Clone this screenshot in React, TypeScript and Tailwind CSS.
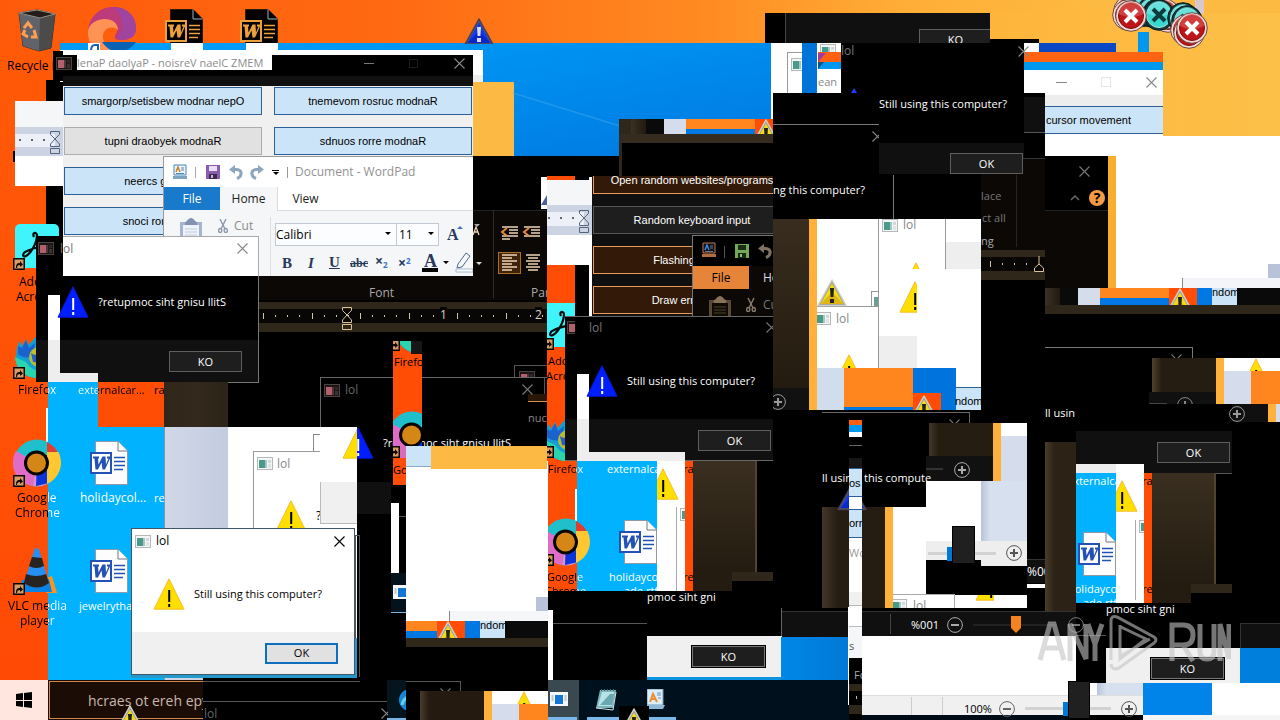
import React from "react";

type Box = { c: string; children?: React.ReactNode };

const Clip = ({ c, children }: Box) => <div className={"absolute overflow-hidden " + c}>{children}</div>;

const Blocks = ({ items }: { items: string[] }) => (
  <>
    {items.map((c, i) => (
      <div key={i} className={"absolute " + c} />
    ))}
  </>
);

const T = ({ c, children }: Box) => <span className={"absolute whitespace-nowrap leading-4 " + c}>{children}</span>;

const Btn = ({ c, children }: Box) => (
  <button type="button" className={"absolute flex items-center justify-center overflow-hidden whitespace-nowrap border leading-4 " + c}>
    {children}
  </button>
);

const Tri = ({ c, fill = "#ffdf00", edge = "#f5bd2b", mark = "#000" }: { c: string; fill?: string; edge?: string; mark?: string }) => (
  <svg viewBox="0 0 32 32" className={"absolute size-8 " + c}>
    <path d="M16 .8 31 31.2H1Z" fill={fill} stroke={edge} strokeWidth="1" strokeLinejoin="round" />
    <path d="M15.2 12h2v12h-2zM15.2 26h2v3h-2z" fill={mark} />
  </svg>
);

const GlossTri = ({ c, blue = false }: { c: string; blue?: boolean }) => (
  <svg viewBox="0 0 30 28" className={"absolute h-7 w-[30px] " + c}>
    <path d="M15 1 29 26.5H1Z" fill={blue ? "#4d5578" : "#9b9b9b"} stroke={blue ? "#4a4050" : "#d0d0c8"} strokeWidth="1.5" strokeLinejoin="round" />
    <path d="M15 4.5 26.5 25h-23Z" fill={blue ? "#1238f0" : "#f2dc12"} />
    <path d="M15 13 26.5 25h-23Z" fill={blue ? "#0a28c8" : "#dfb514"} />
    <path d="M13 9h4l-.6 9h-2.8zM13 20h4v4h-4z" fill={blue ? "#dcdcf0" : "#222"} />
  </svg>
);

const AppIcon = ({ c, dark = false }: { c: string; dark?: boolean }) => (
  <svg viewBox="0 0 16 13" className={"absolute h-[13px] w-4 " + c}>
    <rect x=".5" y=".5" width="15" height="12" fill={dark ? "#1d1518" : "#f4f6f6"} stroke={dark ? "#4a4340" : "#b4b8b8"} />
    <rect x="2" y="3" width="6" height="8" fill={dark ? "#b4606c" : "#4a9a8c"} />
    <rect x="8" y="3" width="2" height="8" fill={dark ? "#4c3636" : "#a6c6c2"} />
    <rect x="11" y="3" width="3" height="3" fill={dark ? "#2c2826" : "#cfd7d9"} />
    <rect x="11" y="7" width="3" height="4" fill={dark ? "#383331" : "#dfe3e4"} />
  </svg>
);

const Cross = ({ c }: { c: string }) => (
  <svg viewBox="0 0 11 11" className={"absolute size-[11px] " + c}>
    <path d="m.5.5 10 10m0-10-10 10" stroke="currentColor" strokeWidth="1.1" />
  </svg>
);

const WordDoc = ({ c, dark = false }: { c: string; dark?: boolean }) => {
  const ink = dark ? "#eaa03c" : "#2451b5";
  const paper = dark ? "#050301" : "#fdfdfd";
  return (
    <svg viewBox="0 0 38 44" className={"absolute h-11 w-[38px] " + c}>
      <path d="M5.500 .5H28L37.500 10V43.500H5.500Z" fill={paper} stroke={dark ? "#2a1c10" : "#909aa6"} />
      <path d="M28 .5V10h9.500" fill={paper} stroke={dark ? "#9ab4c4" : "#707880"} />
      <path d="M24 16.500h11M24 20.500h11M24 24.500h11M24 28.500h9" stroke={ink} strokeWidth="1.300" />
      <rect x="1" y="12" width="20" height="20" fill={paper} stroke={ink} strokeWidth="2" />
      <path d="M3 15.500h6v2H8l.5 6 4-8h3l.5 8 2.500-6h-1.500v-2H20v2l-5 11h-2.500l-1-7-3.500 7H5.500L4.500 17.500H3Z" fill={ink} />
    </svg>
  );
};

const Shortcut = ({ c }: { c: string }) => (
  <svg viewBox="0 0 12 12" className={"absolute size-3 " + c}>
    <path d="M0 0h12v12H0z" fill="#0a0500" />
    <path d="M1.500 1.500h9v9h-9z" fill="#d79c66" />
    <path d="M3 10c0-4 1-5 4-5V3l3 3.500L7 9V7c-2 0-3 1-3 3Z" fill="#120800" />
  </svg>
);

const Hourglass = ({ c }: { c: string }) => (
  <svg viewBox="0 0 10 23" className={"absolute h-[23px] w-2.5 " + c} fill="none" stroke="currentColor">
    <path d="M.5.500h9v3L5 8 .5 3.500zM5 8l4.500 5v2.500H.5V13zM.5 17.500h9v5h-9z" />
  </svg>
);

const Chrome = ({ c, plain = false }: { c: string; plain?: boolean }) => (
  <svg viewBox="0 0 48 48" className={"absolute size-12 " + c}>
    <circle cx="24" cy="24" r="23.500" fill="#1fc0cb" />
    <path d="M24 24 3 12A23.500 23.500 0 0 0 20 47Z" fill="#df6cc6" />
    <path d="M24 24 20 47A23.500 23.500 0 0 0 36 44Z" fill="#e78acb" />
    <path d="M24 24 23 47 36 44V16H24Z" fill="#0b35dc" />
    {!plain && <path d="M34 3a23.500 23.500 0 0 1 11 11H34Z" fill="#e33b2e" />}
    {!plain && <path d="M34 13h11.500A23.500 23.500 0 0 1 34 45Z" fill="#ffc832" />}
    <circle cx="23.500" cy="24" r="11" fill="#d48716" stroke="#080500" strokeWidth="3" />
  </svg>
);

const Firefox = ({ c }: { c: string }) => (
  <svg viewBox="0 0 44 44" className={"absolute size-11 " + c}>
    <path d="M2 20C2 14 4 9 6 6l2 5 4-7 2 6 8-8 2 7c12 1 20 10 18 22-2 8-9 12-18 12C10 43 0 34 2 20Z" fill="#139ed5" />
    <path d="M1 22c1 12 10 21 23 21 9 0 16-5 18-12-9 8-22 8-30-4Z" fill="#29d5ad" />
    <path d="M4 11l4 2 4-8 3 8 6-5-1 7 7 2-8 5c-8 1-12 0-15-3Z" fill="#1a62cd" />
    <circle cx="25" cy="22" r="10" fill="#b8bd38" />
    <path d="M17 18c6 5 12-2 17 3-7 0-8 8-15 6Z" fill="#285ec4" />
  </svg>
);

const Acro = ({ c }: { c: string }) => (
  <svg viewBox="0 0 44 44" className={"absolute size-11 " + c}>
    <rect width="44" height="44" rx="5" fill="#40f4fb" />
    <path d="M19 13c-2-4 2-6 3-2 0 9-7 19-11 21-4 2-4-3 1-5 6-3 14-5 25-5" fill="none" stroke="#050b0d" strokeWidth="2.200" />
  </svg>
);

const Zoomer = ({ c, plus = false }: { c: string; plus?: boolean }) => (
  <svg viewBox="0 0 16 16" className={"absolute size-4 " + c} fill="none" stroke="currentColor">
    <circle cx="8" cy="8" r="7.400" />
    <path d={plus ? "M4 8h8M8 4v8" : "M4 8h8"} strokeWidth="2" />
  </svg>
);

const ErrorBall = ({ c, teal = false }: { c: string; teal?: boolean }) => (
  <svg viewBox="0 0 32 32" className={"absolute size-8 " + c}>
    <circle cx="16" cy="16" r="15.300" fill={teal ? "#123b3b" : "#f2d9d4"} stroke={teal ? "#0a1c1c" : "#6b4744"} />
    <circle cx="16" cy="16" r="12.500" fill={teal ? "#38d7d0" : "#be1419"} stroke={teal ? "#b5e5e2" : "#7c0d10"} />
    <path d="M4 14a12 12 0 0 1 24 0c-7 4-17 4-24 0Z" fill={teal ? "#7be7e2" : "#d9534f"} opacity=".7" />
    <path d="m10 10 12 12m0-12L10 22" stroke={teal ? "#0c3d3d" : "#fff"} strokeWidth="4" />
  </svg>
);

const Scissors = ({ c }: { c: string }) => (
  <svg viewBox="0 0 10 14" className={"absolute h-3.5 w-2.5 " + c} fill="none" stroke="currentColor" strokeWidth="1.400">
    <path d="m2 0 5 10M8 0 3 10" />
    <ellipse cx="2.200" cy="11.500" rx="1.600" ry="2" />
    <ellipse cx="7.800" cy="11.500" rx="1.600" ry="2" />
  </svg>
);

const Clipboard = ({ c, dark = false }: { c: string; dark?: boolean }) => (
  <svg viewBox="0 0 24 28" className={"absolute h-7 w-6 " + c}>
    <path d="M1 4h22v24H1z" fill={dark ? "#5b4937" : "#a6b5cd"} />
    <path d="M4 7h16v21H4z" fill={dark ? "#100c05" : "#eef2fa"} />
    <path d="M6 4c2 0 3-4 6-4s4 4 6 4v3H6Z" fill={dark ? "#8a7257" : "#8192b3"} />
    <path d="M6 11h12M6 14h12M6 17h12" stroke={dark ? "#494027" : "#c3cede"} />
  </svg>
);

const PadIcon = ({ c, dark = false }: { c: string; dark?: boolean }) => (
  <svg viewBox="0 0 14 16" className={"absolute h-4 w-3.5 " + c}>
    <path d="M1 1h12v10H1z" fill={dark ? "#10131c" : "#eef6fd"} stroke={dark ? "#c1774a" : "#3c87bd"} />
    <path d="M3 8 5 3l2 5" fill="none" stroke={dark ? "#3b86e2" : "#ce7a20"} strokeWidth="1.500" />
    <path d="M8 4h3M8 6h3M3 9.500h8" stroke={dark ? "#64789c" : "#4b86b8"} />
    <path d="M0 12h14v3H0z" fill={dark ? "#b06d3e" : "#7ea4c4"} />
  </svg>
);

const Save = ({ c, dark = false }: { c: string; dark?: boolean }) => (
  <svg viewBox="0 0 14 14" className={"absolute size-3.5 " + c}>
    <path d="M0 0h14v14H0z" fill={dark ? "#73a85a" : "#8a5cac"} />
    <path d="M3 1h8v5H3z" fill={dark ? "#1c2d15" : "#e9dff2"} />
    <path d="M3 9h8v5H3z" fill={dark ? "#182811" : "#3c2a50"} />
    <path d="M5 10h2v3H5z" fill={dark ? "#8cbd73" : "#c8b5d8"} />
  </svg>
);

const Undo = ({ c }: { c: string }) => (
  <svg viewBox="0 0 14 15" className={"absolute h-[15px] w-3.5 " + c} fill="none" stroke="currentColor">
    <path d="M2 4.500h6c6 1 5 7 0 9" strokeWidth="3" />
    <path d="m6 0-6 4.500L6 9Z" fill="currentColor" stroke="none" />
  </svg>
);

const ScreenIcon = ({ c }: { c: string }) => (
  <svg viewBox="0 0 18 14" className={"absolute h-3.5 w-[18px] " + c}>
    <path d="M0 0h18v14H0z" fill="#f4f8fb" />
    <path d="M5 3h8v9H5z" fill="#1477d3" />
    <path d="M1.500 4h2M1.500 6h2M1.500 8h2M14.500 4h2M14.500 6h2M14.500 8h2" stroke="#7d97ad" />
  </svg>
);

const Ticks = ({ c }: { c: string }) => (
  <div className={"absolute flex w-[280px] justify-between " + c}>
    {Array.from({ length: 24 }, (_, i) => (
      <i key={i} className={i % 4 === 0 ? "h-1.5 w-px shrink-0 bg-current" : "mt-0.5 h-0.5 w-px shrink-0 bg-current"} />
    ))}
  </div>
);

const Slider = ({ c, label, value }: { c: string; label: string; value: number }) => (
  <input type="range" aria-label={label} defaultValue={value} className={"absolute h-[3px] appearance-none bg-[#d2d2d2] [&::-webkit-slider-thumb]:appearance-none [&::-webkit-slider-thumb]:h-3.5 [&::-webkit-slider-thumb]:w-2.5 [&::-webkit-slider-thumb]:bg-[#0078d7] " + c} />
);

const WarnStrip = ({ c }: { c: string }) => (
  <Clip c={"h-[17px] w-[235px] bg-[#0a0a0a] " + c}>
    <Blocks
      items={[
        "left-0 top-0 w-[15px] h-[17px] bg-linear-to-r from-[#3c3124] to-[#211a10]",
        "left-[33px] top-0 w-[22px] h-[17px] bg-[#d5dded]",
        "left-[55px] top-0 w-[69px] h-[10px] bg-[#ff861f]",
        "left-[55px] top-[10px] w-[97px] h-[7px] bg-[#0078e4]",
        "left-[124px] top-0 w-[28px] h-[17px] bg-[#ff4d08]",
        "left-[152px] top-0 w-[15px] h-[17px] bg-[#0078e4]",
        "left-[167px] top-0 w-[25px] h-[17px] bg-[#cce4f7]",
      ]}
    />
    <GlossTri c="left-[120px] top-0" />
    <T c="left-[167px] -top-1 font-['Liberation_Sans',sans-serif] text-[11px] text-black">ndom</T>
  </Clip>
);

const DesktopBase = () => (
  <>
    <Blocks
      items={[
        "inset-x-0 top-0 h-[43px] bg-[linear-gradient(to_right,#ff5a0a,#ff6a12_400px,#ff8a22_700px,#ffad36_900px,#fdba42_1100px)]",
        "left-0 top-[43px] w-[60px] h-[637px] bg-linear-to-b from-[#ff5a08] to-[#ff4a05]",
        "left-[134px] top-[43px] w-[639px] h-[113px] bg-linear-to-br from-[#00a0fa] to-[#0078e0]",
        "left-[60px] top-[43px] w-[100px] h-[7px] bg-[#009cf3]",
        "left-[990px] top-[13px] right-0 h-[123px] bg-linear-to-r from-[#ffb53c] to-[#fcc048]",
        "left-[473px] top-[82px] w-[41px] h-[74px] bg-[#fcba44]",
        "left-[1138px] top-[32px] w-[11px] h-[20px] bg-[#0098ee]",
        "left-[13px] top-[151px] w-[4px] h-[11px] bg-black",
        "left-[53px] top-[51px] w-[10px] h-[30px] bg-black",
        "left-[46px] top-[80px] w-[17px] h-[157px] bg-black",
        "left-[1195px] top-0 w-[9px] h-[14px] bg-[#d6c8cc]",
      ]}
    />
    <svg viewBox="0 0 300 113" className="absolute left-[473px] top-[43px] h-[113px] w-[300px]">
      <path d="m40 50 107 33" stroke="#3ba7ee" strokeWidth="1.500" opacity=".5" />
    </svg>
    <svg viewBox="0 0 38 44" className="absolute left-[18px] top-[9px] h-11 w-[38px]">
      <path d="M1 4 19 1l18 4-4 34-12 3L5 37Z" fill="#5a5a58" stroke="#37302a" />
      <path d="M1 4 22 9 21 42 5 37Z" fill="#61636a" />
      <path d="M22 9 37 5 33 39 21 42Z" fill="#4b4b4b" />
      <path d="M1 4 19 1l18 4-15 4Z" fill="#241c18" stroke="#8e8e8a" />
      <path d="m6 19 4-5 4 5m2 2 2 7h-5m-3 0-5-3 2-4" fill="none" stroke="#ff9e50" strokeWidth="3" />
    </svg>
    <Clip c="left-[86px] top-[6px] w-[52px] h-[44px]">
      <svg viewBox="0 0 52 48" className="h-12 w-[52px]">
        <path d="M2 24C4 9 15 1 27 1c14 0 23 9 23 21 0 9-6 12-16 12-8 0-5-5-3-8 2-8-12-13-22-5-5 4-7 7-7 3Z" fill="#bd3a7b" />
        <path d="M27 1c14 0 23 9 23 21 0 9-6 12-16 12l-4-3c8-5 9-20-3-30Z" fill="#a0449f" />
        <path d="M2 24c5-15 30-14 30 0-8-6-16 0-15 8 1 9 8 15 18 15C14 50 1 42 2 24Z" fill="#ff9255" />
        <path d="M16 36h34c-8 12-25 13-34 0Z" fill="#0c62b2" />
      </svg>
    </Clip>
    <Clip c="left-[88px] top-[43px] w-[12px] h-[8px] bg-white">
      <svg viewBox="0 0 12 8" className="h-2 w-3"><path d="M3 8c0-4 1-6 4-6h3v5" fill="none" stroke="#1662b0" strokeWidth="2" /></svg>
    </Clip>
    <Clip c="left-[165px] top-[9px] w-[39px] h-[34px]"><WordDoc dark c="left-0 top-0" /></Clip>
    <Clip c="left-[240px] top-[9px] w-[39px] h-[34px]"><WordDoc dark c="left-0 top-0" /></Clip>
    <Blocks items={["left-[171px] top-[43px] w-[32px] h-[7px] bg-white", "left-[246px] top-[43px] w-[32px] h-[7px] bg-white"]} />
    <Clip c="left-[464px] top-[18px] w-[30px] h-[26px]"><GlossTri blue c="left-0 top-0" /></Clip>
    <T c="left-[7px] top-[58px] text-xs text-black">Recycle I</T>
    <Acro c="left-[15px] top-[224px]" />
    <Shortcut c="left-[13px] top-[258px]" />
    <T c="left-[19px] top-[274px] text-xs text-black">Ado</T>
    <T c="left-[16px] top-[289px] text-xs text-black">Acro</T>
    <Firefox c="left-[14px] top-[335px]" />
    <Shortcut c="left-[13px] top-[367px]" />
    <ErrorBall c="left-[1113px] -top-[5px]" />
    <ErrorBall c="left-[1118px] -top-[3px]" />
    <ErrorBall c="left-[1123px] -top-[4px]" />
    <ErrorBall teal c="left-[1128px] -top-[5px]" />
    <ErrorBall teal c="left-[1136px] -top-[4px]" />
    <ErrorBall teal c="left-[1142px] -top-[2px]" />
    <ErrorBall c="left-[1152px] top-px" />
    <ErrorBall c="left-[1148px] -top-[2px]" />
    <ErrorBall teal c="left-[1143px] -top-px" />
    <ErrorBall teal c="left-[1167px] top-[2px]" />
    <ErrorBall teal c="left-[1171px] top-[5px]" />
    <ErrorBall c="left-[1170px] top-[14px]" />
    <ErrorBall c="left-[1173px] top-[17px]" />
    <ErrorBall c="left-[1112px] -top-px" />
    <ErrorBall c="left-[1115px] top-0" />
    <ErrorBall c="left-[1176px] top-[12px]" />
  </>
);

const PayloadPanel = () => {
  const b = "font-['Liberation_Sans',sans-serif] text-[11px] text-black border-[#2c5f97] bg-[#cce4f7] h-7 w-[198px]";
  return (
    <>
      <Blocks
        items={[
          "left-[60px] top-[50px] w-[423px] h-[32px] bg-white",
          "left-[473px] top-[75px] w-[10px] h-[7px] bg-[#eeeeee]",
          "left-[53px] top-[51px] w-[10px] h-[30px] bg-black",
          "left-[63px] top-[55px] w-[410px] h-[21px] bg-black",
          "left-[77px] top-[51px] w-[195px] h-[19px] bg-white",
          "left-[63px] top-[76px] w-[410px] h-[10px] bg-[#101010]",
          "left-[63px] top-[86px] w-[410px] h-[151px] bg-[#f0f0f0]",
          "left-[364px] top-[63px] w-[10px] h-px bg-[#777]",
          "left-[409px] top-[59px] w-[9px] h-[9px] border border-[#1c1c1c]",
        ]}
      />
      <AppIcon dark c="left-[56px] top-[57px]" />
      <T c="left-[77px] top-[55px] text-[11px] text-[#8c8c8c]">lenaP daolyaP - noisreV naelC ZMEM</T>
      <Cross c="left-[454px] top-[58px] text-[#8a8a8a]" />
      <Btn c={"left-[64px] top-[87px] " + b}>smargorp/setisbew modnar nepO</Btn>
      <Btn c={"left-[274px] top-[87px] " + b}>tnemevom rosruc modnaR</Btn>
      <Btn c="left-[64px] top-[127px] h-7 w-[198px] border-[#adadad] bg-[#e1e1e1] font-['Liberation_Sans',sans-serif] text-[11px] text-black">tupni draobyek modnaR</Btn>
      <Btn c={"left-[274px] top-[127px] " + b}>sdnuos rorre modnaR</Btn>
      <Btn c={"left-[64px] top-[167px] " + b}>neercs gnihsalF</Btn>
      <Btn c={"left-[64px] top-[207px] " + b}>snoci rorre warD</Btn>
      <Clip c="left-[15px] top-[101px] w-[48px] h-[85px] bg-white">
        <Blocks items={["inset-x-0 top-0 h-[26px] bg-[#f5f6f7]", "inset-x-0 top-[26px] h-[29px] bg-[#ccd3e2]", "left-0 right-2 top-[33px] h-[13px] bg-[#edf0f8]", "left-[4px] top-[38px] size-0.5 bg-[#666]", "left-[16px] top-[38px] size-0.5 bg-[#666]", "left-[28px] top-[38px] size-0.5 bg-[#666]"]} />
        <Hourglass c="left-[35px] top-[30px] text-[#53657c]" />
      </Clip>
    </>
  );
};

const WordPadDark = () => (
  <>
    <Clip c="left-[259px] top-[156px] w-[288px] h-[292px] bg-black">
      <Blocks
        items={[
          "inset-x-0 top-[54px] h-[90px] border-t border-[#222] bg-[#0b0806]",
          "left-[234px] top-[54px] w-px h-[88px] bg-[#302b28]",
          "inset-x-0 top-[146px] h-[30px] bg-[#30271b]",
          "inset-x-0 top-[153px] h-[14px] bg-[#080706]",
          "left-[239px] top-[96px] w-[23px] h-[22px] border border-[#aa6e28] bg-[#402408]",
        ]}
      />
      <svg viewBox="0 0 76 60" className="absolute left-[212px] top-[66px] h-[60px] w-[76px]" fill="none" stroke="#efd5b8" strokeWidth="1.300">
        <path d="M2 13 5 5l3 8M3 10h4M31 5h16M38 8h9M38 11h9M31 14h16M31 17h8M53 5h16M60 8h9M60 11h9M53 14h16" />
        <path d="M3 2h6L6 5z" fill="#aaa" stroke="none" />
        <path d="m36 6-5 4 5 4m22-8-5 4 5 4" stroke="#e58a38" strokeWidth="2" />
        <path d="M31 33h15M31 36h10M31 39h15M31 42h10M31 45h15M31 48h10M55 33h14M57 36h10M55 39h14M57 42h10M55 45h14M57 48h10" />
      </svg>
      <T c="left-[110px] top-[129px] text-xs text-[#aaa]">Font</T>
      <T c="left-[272px] top-[129px] text-xs text-[#aaa]">Par</T>
      <Ticks c="left-[4px] top-[157px] text-[#cfc4ae]" />
      <T c="left-[181px] top-[151px] bg-[#080706] text-xs text-[#d8d0c2]">1</T>
      <T c="left-[276px] top-[151px] bg-[#080706] text-xs text-[#d8d0c2]">2</T>
      <Hourglass c="left-[83px] top-[151px] text-[#dcc49a]" />
      <svg viewBox="0 0 6 3" className="absolute left-[217px] top-[106px] h-[3px] w-1.5"><path d="M0 0h6L3 3z" fill="#ddd" /></svg>
    </Clip>
    <Blocks items={["left-[541px] top-[177px] w-[6px] h-[32px] bg-white"]} />
    <svg viewBox="0 0 6 10" className="absolute left-[541px] top-[195px] h-2.5 w-1.5"><path d="m6 0v10H0Z" fill="#4d5f9a" /></svg>
  </>
);

const WordPadLight = () => (
  <Clip c="left-[163px] top-[156px] w-[310px] h-[120px] border-l border-t border-[#9a9a9a] bg-[#f5f6f7]">
    <div className="absolute inset-x-0 top-0 h-[30px] bg-white" />
    <PadIcon c="left-[9px] top-[7px]" />
    <Save c="left-[42px] top-[8px]" />
    <Undo c="left-[65px] top-[8px] text-[#8da6bd]" />
    <Undo c="left-[86px] top-[8px] -scale-x-100 text-[#8da6bd]" />
    <Blocks items={["left-[31px] top-[10px] w-px h-[11px] bg-[#aaa]", "left-[123px] top-[10px] w-px h-[11px] bg-[#999]", "left-[108px] top-[13px] w-[7px] h-px bg-black", "left-[113px] top-[30px] right-0 h-[24px] border-b border-l border-[#dadbdc] bg-white", "left-[106px] top-[60px] w-px h-[60px] bg-[#dedfe1]"]} />
    <svg viewBox="0 0 6 3" className="absolute left-[109px] top-[15px] h-[3px] w-1.5"><path d="M0 0h6L3 3z" /></svg>
    <T c="left-[131px] top-[7px] text-xs text-[#929292]">Document - WordPad</T>
    <Btn c="left-0 top-[30px] h-[23px] w-[56px] border-[#1979ca] bg-[#1979ca] text-xs text-white">File</Btn>
    <Btn c="left-[56px] top-[30px] h-[23px] w-[57px] border-transparent text-xs text-[#222]">Home</Btn>
    <Btn c="left-[114px] top-[30px] h-[23px] w-[55px] border-transparent text-xs text-[#222]">View</Btn>
    <Clipboard c="left-[15px] top-[61px]" />
    <Scissors c="left-[54px] top-[62px] text-[#8c98ac]" />
    <T c="left-[70px] top-[61px] text-xs text-[#8b8b8b]">Cut</T>
    <select aria-label="Font family" className="absolute left-[111px] top-[66px] h-[23px] w-[122px] appearance-none border border-[#c3c9d2] bg-[#fcfdfe] text-xs leading-4 text-black"><option>Calibri</option></select>
    <select aria-label="Font size" className="absolute left-[232px] top-[66px] h-[23px] w-[43px] appearance-none border border-[#c3c9d2] bg-[#fcfdfe] px-0.5 text-xs leading-4 text-black"><option>11</option></select>
    <svg viewBox="0 0 200 60" className="absolute left-[110px] top-[62px] h-[60px] w-[200px]">
      <path d="M111 13h6l-3 3zM154 13h6l-3 3zM169 42h6l-3 3z" />
      <path d="m183 10 3-3 3 3z" fill="#4272b5" />
      <path d="M148 49h16v4h-16z" />
      <path d="m184 45 8-11 4 3-8 11-5 1z" fill="#f4f6f8" stroke="#52688b" />
      <path d="M182 50h17v3h-17z" fill="#fff" stroke="#a3bad1" />
    </svg>
    <div className="font-['Liberation_Serif',serif] font-bold text-[#27395b]">
      <T c="left-[283px] top-[70px] text-base">A</T>
      <T c="left-[118px] top-[98px] text-[15px]">B</T>
      <T c="left-[144px] top-[98px] text-[15px] italic">I</T>
      <T c="left-[165px] top-[97px] text-[15px] underline">U</T>
      <T c="left-[186px] top-[98px] text-xs line-through">abc</T>
      <T c="left-[260px] top-[96px] text-lg">A</T>
    </div>
    <T c="left-[211px] top-[96px] text-sm font-bold text-[#27395b]">×<sub className="text-[8px] text-[#3972c4]">2</sub></T>
    <T c="left-[234px] top-[98px] text-sm font-bold text-[#27395b]">×<sup className="text-[8px] text-[#3972c4]">2</sup></T>
  </Clip>
);

const LeftDarkDialog = () => (
  <>
    <Blocks
      items={[
        "left-[36px] top-[236px] w-[27px] h-[146px] bg-black",
        "left-[36px] top-[340px] w-[12px] h-[42px] bg-[#101010]",
        "left-[48px] top-[295px] w-[12px] h-[45px] bg-white",
        "left-[48px] top-[340px] w-[50px] h-[42px] bg-[#eeeeee]",
        "left-[63px] top-[236px] w-[196px] h-[40px] border-t border-r border-[#aaa] bg-white",
        "left-[60px] top-[276px] w-[199px] h-[64px] border-r border-[#777] bg-black",
        "left-[60px] top-[340px] w-[199px] h-[33px] border-r border-[#777] bg-[#101010]",
        "left-[98px] top-[373px] w-[161px] h-[10px] border-b border-r border-[#777] bg-[#101010]",
      ]}
    />
    <AppIcon dark c="left-[38px] top-[242px]" />
    <T c="left-[60px] top-[241px] text-xs text-[#777]">lol</T>
    <Cross c="left-[237px] top-[243px] text-[#888]" />
    <Tri c="left-[57px] top-[286px]" fill="#001eff" edge="#0718d8" mark="#fff" />
    <T c="left-[98px] top-[294px] text-[11px] text-white">?retupmoc siht gnisu llitS</T>
    <Btn c="left-[169px] top-[351px] h-[21px] w-[73px] border-[#5e5e5e] bg-[#1e1e1e] text-[11px] text-white">KO</Btn>
  </>
);

const LeftDesktop = () => (
  <>
    <Blocks
      items={[
        "left-[48px] top-[382px] w-[116px] h-[298px] bg-[#00b2ff]",
        "left-[98px] top-[382px] w-[66px] h-[45px] bg-[#ff4d05]",
        "left-[164px] top-[382px] w-[64px] h-[45px] bg-linear-to-r from-[#30271b] via-[#33291c] to-[#2c2419]",
        "left-[46px] top-[408px] w-[2px] h-[40px] bg-white",
        "left-[164px] top-[427px] w-[64px] h-[253px] border-l border-[#8296b6] bg-linear-to-r from-[#d0d8e8] to-[#c3ccdf]",
        "left-[228px] top-[427px] w-[129px] h-[253px] bg-white",
        "left-[228px] top-[383px] w-[165px] h-[44px] bg-black",
        "left-[313px] top-[434px] w-[7px] h-[18px] border-l border-t border-[#888]",
        "left-[253px] top-[451px] w-[67px] h-[78px] border-l border-t border-[#999]",
        "left-[320px] top-[482px] w-[37px] h-[42px] border-b border-l border-[#bbb] bg-[#f0f0f0]",
      ]}
    />
    <AppIcon c="left-[257px] top-[457px]" />
    <T c="left-[277px] top-[456px] text-xs text-[#888]">lol</T>
    <Tri c="left-[275px] top-[500px]" />
    <Clip c="left-[316px] top-[508px] w-[4px] h-[16px]"><T c="left-0 top-0 text-xs">?</T></Clip>
    <Clip c="left-[13px] top-[439px] w-[48px] h-[50px]"><Chrome c="left-0 top-0" /></Clip>
    <Shortcut c="left-[13px] top-[475px]" />
    <svg viewBox="0 0 48 48" className="absolute left-[12px] top-[547px] size-12">
      <path d="m34 31 6-2 5 17H34Z" fill="#ff941a" />
      <path d="m10 33 27-1 3 13H8Z" fill="#0b83e5" />
      <path d="m23 1 4 1 10 34q-12 9-25 0Z" fill="#268ff2" />
      <path d="m20 10 10 1 2 8q-8 4-15 0zM14 27q10 4 20 0l3 9q-12 9-25 0z" fill="#272320" />
    </svg>
    <Shortcut c="left-[13px] top-[583px]" />
    <WordDoc c="left-[90px] top-[441px]" />
    <WordDoc c="left-[90px] top-[549px]" />
    <T c="left-[18px] top-[382px] bg-[linear-gradient(to_right,black_30px,white_30px)] bg-clip-text text-xs text-transparent">Firefox</T>
    <T c="left-[78px] top-[382px] bg-[linear-gradient(to_right,white_20px,black_20px)] bg-clip-text text-[11px] text-transparent">externalcar...</T>
    <T c="left-[154px] top-[382px] text-[11px] text-black">ra</T>
    <T c="left-[17px] top-[490px] bg-[linear-gradient(to_right,black_31px,white_31px)] bg-clip-text text-xs text-transparent">Google</T>
    <T c="left-[15px] top-[505px] bg-[linear-gradient(to_right,black_33px,white_33px)] bg-clip-text text-xs text-transparent">Chrome</T>
    <T c="left-[80px] top-[490px] text-xs text-white">holidaycol...</T>
    <T c="left-[154px] top-[490px] text-[11px] text-white">re</T>
    <T c="left-[8px] top-[598px] bg-[linear-gradient(to_right,black_40px,white_40px)] bg-clip-text text-xs text-transparent">VLC media</T>
    <T c="left-[20px] top-[613px] bg-[linear-gradient(to_right,black_28px,white_28px)] bg-clip-text text-xs text-transparent">player</T>
    <T c="left-[79px] top-[598px] text-[11px] text-white">jewelrytha</T>
  </>
);

const MiddleColumn = () => (
  <>
    <Blocks
      items={[
        "left-[357px] top-[427px] w-[192px] h-[293px] bg-black",
        "left-[357px] top-[482px] w-[34px] h-[32px] bg-[#101010]",
        "left-[355px] top-[535px] w-[5px] h-[147px] border border-[#555]",
        "left-[391px] top-[503px] w-[8px] h-[70px] bg-white",
        "left-[399px] top-[516px] w-[7px] h-px bg-[#555]",
        "left-[391px] top-[573px] w-[15px] h-[40px] border-b border-[#78b4e6] bg-[#04121b]",
        "left-[320px] top-[377px] w-[227px] h-[50px] border-l border-t border-[#666] bg-black",
        "left-[514px] top-[365px] w-[33px] h-[12px] border-l border-t border-[#555]",
        "left-[544px] top-[377px] w-px h-[17px] bg-[#555]",
        "left-[528px] top-[394px] w-[19px] h-[8px] border-b border-[#d69052] bg-[#2a1608]",
      ]}
    />
    <Clip c="left-[391px] top-[585px] w-[15px] h-[16px]"><ScreenIcon c="left-[2px] top-0" /></Clip>
    <AppIcon dark c="left-[324px] top-[384px]" />
    <T c="left-[345px] top-[382px] text-xs text-[#666]">lol</T>
    <Clip c="left-[519px] top-[371px] w-[28px] h-[6px]"><AppIcon dark c="left-0 top-0" /></Clip>
    <Cross c="left-[522px] top-[384px] text-[#777]" />
    <T c="left-[528px] top-[410px] text-[11px] text-[#888]">nuc</T>
    <Tri c="left-[342px] top-[427px]" />
    <Clip c="left-[357px] top-[427px] w-[18px] h-[32px] bg-black"><Tri c="-left-[15px] top-0" fill="#001eff" edge="#0718d8" mark="#fff" /></Clip>
    <T c="left-[383px] top-[435px] text-[11px] text-white">?retupmoc siht gnisu llitS</T>
    <Clip c="left-[393px] top-[341px] w-[29px] h-[105px] bg-[#ff4d05]">
      <Firefox c="left-[2px] -top-[31px]" />
      <Blocks items={["left-[18px] top-0 w-[11px] h-[13px] bg-[#161616]"]} />
      <Shortcut c="-left-[5px] -top-[2px]" />
      <T c="left-[1px] top-[13px] text-[11px] text-black">Firefo</T>
      <Chrome plain c="-left-[5px] top-[70px]" />
    </Clip>
    <Clip c="left-[393px] top-[446px] w-[13px] h-[39px] bg-[#ff4d05]">
      <div className="absolute left-0 top-0 h-3 w-[13px] bg-[#dc6abc]" />
      <Shortcut c="-left-[5px] top-0" />
      <T c="left-0 top-4 text-[11px] text-black">Go</T>
    </Clip>
    <Blocks
      items={[
        "left-[406px] top-[446px] w-[142px] h-[165px] bg-white",
        "left-[406px] top-[446px] w-[25px] h-[21px] border-b border-[#86aac8] bg-[#cce4f7]",
        "left-[431px] top-[446px] w-[116px] h-[23px] bg-[#fcba44]",
        "left-[406px] top-[611px] w-[44px] h-[10px] border-r border-[#888] bg-white",
        "left-[450px] top-[611px] w-[98px] h-[10px] bg-[#f5f6f7]",
        "left-[536px] top-[597px] w-[12px] h-[14px] bg-[#b8c3d9]",
      ]}
    />
    <Clip c="left-[406px] top-[621px] w-[142px] h-[17px]"><WarnStrip c="-left-[93px] top-0" /></Clip>
    <Blocks
      items={[
        "left-[406px] top-[638px] w-[142px] h-[9px] bg-[#30271b]",
        "left-[406px] top-[681px] w-[55px] h-[11px] border-r border-t border-[#555]",
      ]}
    />
    <Clip c="left-[438px] top-[688px] w-[14px] h-[4px]"><Cross c="left-[2px] top-0 text-[#777]" /></Clip>
    <Blocks
      items={[
        "left-[420px] top-[691px] w-[64px] h-[29px] bg-linear-to-r from-[#4a3d2c] to-[#241a0f] to-15%",
        "left-[484px] top-[691px] w-[8px] h-[29px] bg-[#ffb13c]",
        "left-[492px] top-[691px] w-[56px] h-[13px] bg-white",
        "left-[492px] top-[704px] w-[27px] h-[16px] bg-[#d5dded]",
        "left-[519px] top-[704px] w-[29px] h-[16px] bg-[#ff861f]",
      ]}
    />
    <Clip c="left-[508px] top-[691px] w-[32px] h-[13px]"><Tri c="left-0 top-0" /></Clip>
  </>
);

const PayloadDark = () => {
  const b = "font-['Liberation_Sans',sans-serif] text-[11px] text-white w-[198px] h-7 ";
  return (
    <>
      <Blocks items={["left-[473px] top-[156px] w-[146px] h-[21px] bg-black", "left-[547px] top-[177px] w-[45px] h-[284px] bg-white", "left-[547px] top-[176px] w-[28px] h-[4px] bg-[#ff4d05]", "left-[575px] top-[176px] w-[14px] h-[4px] bg-black"]} />
      <Clip c="left-[547px] top-[180px] w-[45px] h-[85px] bg-white">
        <Blocks items={["inset-x-0 top-0 h-[25px] bg-[#f5f6f7]", "inset-x-0 top-[25px] h-[30px] bg-[#ccd3e2]", "left-0 right-2 top-[32px] h-[14px] bg-[#edf0f8]", "left-[1px] top-[37px] size-0.5 bg-[#666]", "left-[13px] top-[37px] size-0.5 bg-[#666]", "left-[25px] top-[37px] size-0.5 bg-[#666]"]} />
        <Hourglass c="left-[32px] top-[30px] text-[#53657c]" />
      </Clip>
      <Clip c="left-[592px] top-[176px] w-[181px] h-[140px] bg-[#101010]">
        <Btn c={"left-px -top-[10px] border-[#e89b5c] bg-[#331a08] " + b}>Open random websites/programs</Btn>
        <Btn c={"left-px top-[30px] border-[#555] bg-[#1e1e1e] " + b}>Random keyboard input</Btn>
        <Btn c={"left-px top-[70px] border-[#e89b5c] bg-[#331a08] " + b}>Flashing screen</Btn>
        <Btn c={"left-px top-[110px] border-[#e89b5c] bg-[#331a08] " + b}>Draw error icons</Btn>
      </Clip>
      <Clip c="left-[692px] top-[235px] w-[81px] h-[81px] border-l border-t border-[#777] bg-[#0b0806]">
        <div className="absolute inset-x-0 top-0 h-[30px] bg-black" />
        <PadIcon dark c="left-[9px] top-[6px]" />
        <Save dark c="left-[42px] top-[8px]" />
        <Undo c="left-[65px] top-[8px] text-[#807263]" />
        <div className="absolute left-[31px] top-2.5 h-3 w-px bg-[#555]" />
        <Btn c="left-0 top-[30px] h-[23px] w-[56px] border-[#e6853a] bg-[#e6853a] text-xs text-black">File</Btn>
        <T c="left-[70px] top-[34px] text-xs text-[#ddd]">Ho</T>
        <Clipboard dark c="left-[15px] top-[60px]" />
        <Scissors c="left-[53px] top-[62px] text-[#897d70]" />
        <T c="left-[70px] top-[61px] text-xs text-[#777]">Cu</T>
      </Clip>
      <Clip c="left-[619px] top-[119px] w-[154px] h-[57px] bg-[#30271b]">
        <WarnStrip c="left-[12px] top-0" />
        <Blocks items={["inset-x-0 top-[15px] h-[9px] bg-[#352b1f]", "left-[3px] right-0 top-[24px] h-[33px] bg-black"]} />
      </Clip>
    </>
  );
};

const CenterDialog = () => (
  <>
    <Blocks items={["left-[547px] top-[265px] w-[28px] h-[196px] bg-[#ff4d05]", "left-[575px] top-[265px] w-[14px] h-[55px] bg-black"]} />
    <Clip c="left-[547px] top-[303px] w-[28px] h-[160px]">
      <Acro c="-left-[5px] top-0" />
      <Shortcut c="-left-[5px] top-[35px]" />
      <T c="left-px top-[50px] text-[11px]">Ado</T>
      <T c="-left-px top-[65px] text-[11px]">Acro</T>
      <Firefox c="-left-[4px] top-[115px]" />
      <Shortcut c="-left-[5px] top-[143px]" />
    </Clip>
    <Blocks
      items={[
        "left-[565px] top-[316px] w-[208px] h-[103px] border-t border-[#666] bg-black",
        "left-[565px] top-[419px] w-[208px] h-[42px] border-b border-[#666] bg-[#101010]",
        "left-[577px] top-[374px] w-[12px] h-[45px] bg-white",
        "left-[577px] top-[419px] w-[12px] h-[42px] bg-[#eee]",
        "left-[577px] top-[452px] w-[108px] h-[9px] bg-[#eee]",
      ]}
    />
    <Clip c="left-[567px] top-[321px] w-[8px] h-[14px]"><AppIcon dark c="left-0 top-0" /></Clip>
    <T c="left-[589px] top-[320px] text-xs text-[#777]">lol</T>
    <Clip c="left-[766px] top-[322px] w-[7px] h-[12px]"><Cross c="left-0 top-0 text-[#777]" /></Clip>
    <Tri c="left-[586px] top-[365px]" fill="#001eff" edge="#0718d8" mark="#fff" />
    <T c="left-[627px] top-[373px] text-[11px] text-white">Still using this computer?</T>
    <Btn c="left-[698px] top-[430px] h-[21px] w-[73px] border-[#5e5e5e] bg-[#1e1e1e] text-[11px] text-white">OK</Btn>
  </>
);

const CenterDesktop = () => (
  <>
    <Clip c="left-[548px] top-[461px] w-[225px] h-[130px] bg-black">
      <Blocks
        items={[
          "left-0 top-0 w-[29px] h-[130px] bg-[#ff4d05]",
          "left-[29px] top-0 w-[80px] h-[130px] bg-[#00b2ff]",
          "left-[27px] top-[28px] w-[2px] h-[41px] bg-white",
          "left-[109px] top-0 w-[28px] h-[130px] bg-white",
          "left-[128px] top-[46px] w-px h-[84px] bg-[#aaa]",
          "left-[137px] top-0 w-[8px] h-[130px] bg-[#ff4d05]",
          "left-[145px] top-0 w-[64px] h-[111px] border-r-2 border-[#51432f] bg-linear-to-b from-[#3a2f20] to-[#241c11]",
          "left-[145px] top-[111px] w-[39px] h-[19px] bg-[#241c11]",
          "left-[184px] top-[111px] w-[41px] h-[9px] bg-[#30271b]",
        ]}
      />
      <Clip c="left-[109px] top-0 w-[23px] h-[60px]"><Tri c="-left-[10px] top-[7px]" /></Clip>
      <Clip c="left-[132px] top-[47px] w-[5px] h-[14px]"><AppIcon c="left-0 top-0" /></Clip>
      <Chrome c="-left-[6px] top-[57px]" />
      <Shortcut c="-left-[6px] top-[93px]" />
      <Clip c="left-0 top-0 w-[109px] h-[130px]">
        <WordDoc c="left-[71px] top-[59px]" />
        <T c="left-0 top-0 bg-[linear-gradient(to_right,black_28px,white_28px)] bg-clip-text text-[11px] text-transparent">Firefox</T>
        <T c="left-[59px] top-0 text-[11px] text-white">externalca</T>
        <T c="left-[-1px] top-[108px] bg-[linear-gradient(to_right,black_30px,white_30px)] bg-clip-text text-[11px] text-transparent">Google</T>
        <T c="left-[-3px] top-[122px] bg-[linear-gradient(to_right,black_32px,white_32px)] bg-clip-text text-[11px] text-transparent">Chrome</T>
        <T c="left-[61px] top-[108px] text-[11px] text-white">holidayco</T>
        <T c="left-[76px] top-[122px] text-[11px] text-white">ade.rtf</T>
      </Clip>
      <Clip c="left-[137px] top-0 w-[8px] h-[130px]">
        <T c="-left-[2px] top-0 text-[11px]">ra</T>
        <T c="-left-[2px] top-[108px] text-[11px]">re</T>
      </Clip>
    </Clip>
    <Blocks
      items={[
        "left-[773px] top-[410px] w-[272px] h-[310px] bg-black",
        "left-[548px] top-[591px] w-[233px] h-[89px] bg-black",
        "left-[548px] top-[610px] w-[5px] h-[70px] bg-white",
        "left-[553px] top-[623px] w-[94px] h-px bg-[#555]",
        "left-[781px] top-[611px] w-[68px] h-[26px] border-t border-[#333] bg-[#101010]",
        "left-[781px] top-[608px] w-px h-[28px] bg-[#666]",
        "left-[647px] top-[636px] w-[135px] h-[41px] bg-[#f0f0f0]",
        "left-[781px] top-[637px] w-[68px] h-[43px] bg-linear-to-r from-[#0087e6] to-[#0078d8]",
        "left-[647px] top-[677px] w-[134px] h-[3px] bg-[#0b94df]",
        "left-[548px] top-[680px] w-[301px] h-[40px] bg-[#00111e]",
        "left-[548px] top-[680px] w-[31px] h-[40px] bg-[#3a4850]",
        "left-[548px] top-[717px] w-[29px] h-[3px] bg-[#7ab8ec]",
        "left-[587px] top-[717px] w-[32px] h-[3px] bg-[#7ab8ec]",
        "left-[640px] top-[717px] w-[36px] h-[3px] bg-[#7ab8ec]",
      ]}
    />
    <T c="left-[647px] top-[589px] text-[11px] text-white">pmoc siht gni</T>
    <Btn c="left-[691px] top-[645px] h-[23px] w-[75px] border-2 border-black bg-[#1e1e1e] text-[11px] text-white outline-1 -outline-offset-2 outline-[#777]">KO</Btn>
    <ScreenIcon c="left-[550px] top-[692px]" />
    <svg viewBox="0 0 22 22" className="absolute left-[595px] top-[689px] size-[22px]">
      <path d="M5 1h16l-3 18H1Z" fill="#79b4bd" />
      <path d="M7 3h12l-2 14H3Z" fill="#b8e3e6" />
      <path d="m5 16 10-11h4l-2 11Z" fill="#6aa7b0" />
      <path d="m1 19 17 2 3-18" fill="none" stroke="#dbe9e9" />
      <path d="M6 1h14" stroke="#42636c" strokeWidth="2" strokeDasharray="1 2" />
    </svg>
    <svg viewBox="0 0 18 20" className="absolute left-[647px] top-[689px] h-5 w-[18px]">
      <path d="M0 0h16v16H0z" fill="#dcecf8" stroke="#6c9dbc" />
      <path d="m3 13 3-8 4 8M4 10h4" fill="none" stroke="#ef8c2e" strokeWidth="2" />
      <path d="M10 4h4M10 6h4M11 9h3" stroke="#5898c6" />
      <path d="M0 16h18l-2 4H0z" fill="#8fb9d6" />
    </svg>
    <Clip c="left-[619px] top-[706px] w-[30px] h-[14px] bg-black"><GlossTri c="left-0 top-[2px]" /></Clip>
  </>
);

const RightTop = () => (
  <>
    <Blocks
      items={[
        "left-[765px] top-[13px] w-[225px] h-[30px] bg-black",
        "left-[785px] top-[13px] w-[205px] h-[30px] border-l border-[#444] bg-[#101010]",
        "left-[990px] top-[39px] w-[49px] h-[4px] bg-black",
        "left-[771px] top-[43px] w-[70px] h-[76px] bg-white",
        "left-[787px] top-[52px] w-[15px] h-[41px] border-l border-t border-[#999]",
        "left-[802px] top-[43px] w-[15px] h-[50px] bg-[#0074d8]",
        "left-[818px] top-[52px] w-[23px] h-[10px] bg-[#ff5f10]",
        "left-[818px] top-[62px] w-[23px] h-[7px] bg-[#0098ee]",
        "left-[841px] top-[43px] w-[183px] h-[50px] bg-black",
        "left-[773px] top-[93px] w-[272px] h-[126px] bg-black",
        "left-[879px] top-[143px] w-[145px] h-[31px] bg-[#101010]",
        "left-[773px] top-[124px] w-[106px] h-px bg-[#777]",
        "left-[893px] top-[175px] w-px h-[44px] bg-[#777]",
        "left-[1024px] top-[96px] w-[21px] h-[37px] border-b border-[#555] bg-[#101010]",
        "left-[1024px] top-[43px] w-[15px] h-[10px] bg-white",
        "left-[1039px] top-[43px] w-[77px] h-[9px] bg-[#0848c4]",
        "left-[1024px] top-[52px] w-[139px] h-[10px] bg-[#ff6412]",
        "left-[1024px] top-[62px] w-[139px] h-[8px] bg-[#0098ee]",
        "left-[1024px] top-[70px] w-[139px] h-[25px] bg-white",
        "left-[1045px] top-[95px] w-[118px] h-[11px] bg-[#ededed]",
        "left-[1045px] top-[106px] w-[118px] h-[28px] border-y border-[#2c5f97] bg-[#cce4f7]",
        "left-[1045px] top-[134px] w-[118px] h-[3px] bg-white",
        "left-[1056px] top-[82px] w-[11px] h-px bg-[#888]",
        "left-[1101px] top-[77px] w-[10px] h-[10px] border border-[#e4e4e4]",
        "left-[1024px] top-[93px] w-[21px] h-[4px] bg-black",
        "left-[1045px] top-[136px] right-0 h-[152px] bg-white",
        "left-[1045px] top-[156px] w-[63px] h-[54px] bg-black",
        "left-[1045px] top-[210px] w-[63px] h-[78px] border-t border-[#222] bg-[#0b0806]",
        "left-[1108px] top-[156px] w-[8px] h-[132px] bg-[#faae30]",
        "left-[981px] top-[158px] w-[64px] h-[93px] border-t border-[#333] bg-[#0b0806]",
        "left-[1016px] top-[175px] w-px h-[72px] bg-[#292320]",
        "left-[981px] top-[250px] w-[64px] h-[30px] bg-[#30271b]",
        "left-[981px] top-[257px] w-[64px] h-[14px] bg-[#080706]",
        "left-[981px] top-[280px] w-[64px] h-[130px] bg-black",
        "left-[1182px] top-[278px] right-0 h-[10px] border-l border-[#888] bg-[#f3f5f8]",
        "left-[1268px] top-[264px] right-0 h-[14px] bg-[#b8c3d9]",
      ]}
    />
    <Clip c="left-[919px] top-[29px] w-[71px] h-[14px]"><Btn c="left-0 top-0 h-[21px] w-[73px] border-[#5e5e5e] bg-[#1e1e1e] text-[11px] text-white">KO</Btn></Clip>
    <Clip c="left-[791px] top-[58px] w-[11px] h-[14px]"><AppIcon c="left-0 top-0" /></Clip>
    <Clip c="left-[818px] top-[44px] w-[23px] h-[8px]"><AppIcon c="left-[2px] top-0" /></Clip>
    <svg viewBox="0 0 8 16" className="absolute left-[818px] top-[53px] h-4 w-2"><path d="M0 0h8L0 9z" fill="#a238a0" /><path d="M0 9h6L0 16z" fill="#0b528c" /></svg>
    <T c="left-[841px] top-[43px] text-xs text-[#777]">lol</T>
    <T c="left-[818px] top-[74px] text-[11px] text-[#888]">ean</T>
    <Cross c="left-[1018px] top-[46px] text-[#888]" />
    <svg viewBox="0 0 6 5" className="absolute left-[851px] top-[88px] h-[5px] w-1.5"><path d="m3 0 3 5H0z" fill="#203cff" /></svg>
    <T c="left-[879px] top-[96px] text-[11px] text-white">Still using this computer?</T>
    <Clip c="left-[872px] top-[131px] w-[7px] h-[12px]"><Cross c="left-0 top-0 text-[#888]" /></Clip>
    <Btn c="left-[950px] top-[153px] h-[21px] w-[73px] border-[#5e5e5e] bg-[#1e1e1e] text-[11px] text-white">OK</Btn>
    <T c="left-[773px] top-[182px] text-[11px] text-white">ng this computer?</T>
    <T c="left-[1046px] top-[112px] font-['Liberation_Sans',sans-serif] text-[11px] text-black">cursor movement</T>
    <Cross c="left-[1146px] top-[77px] text-[#888]" />
    <Cross c="left-[1079px] top-[166px] text-[#777]" />
    <svg viewBox="0 0 10 6" className="absolute left-[1070px] top-[195px] h-1.5 w-2.5"><path d="m1 5 4-4 4 4" fill="none" stroke="#666" strokeWidth="1.500" /></svg>
    <button type="button" aria-label="Help" className="absolute left-[1089px] top-[190px] size-4 rounded-full bg-[#f69a45] text-center text-sm leading-4 font-bold text-black">?</button>
    <T c="left-[981px] top-[188px] text-[11px] text-[#777]">lace</T>
    <T c="left-[982px] top-[210px] text-[11px] text-[#777]">ct all</T>
    <T c="left-[981px] top-[233px] text-[11px] text-[#aaa]">ng</T>
    <Clip c="left-[981px] top-[261px] w-[50px] h-[6px]"><Ticks c="left-[9px] top-0 text-[#cfc4ae]" /></Clip>
    <svg viewBox="0 0 10 17" className="absolute left-[1034px] top-[256px] h-[17px] w-2.5"><path d="M5 0v8M.5 15.500V12L5 8l4.500 4v3.500z" fill="none" stroke="#dcc49a" /></svg>
  </>
);

const WhiteStack = () => (
  <>
    <Clip c="left-[773px] top-[219px] w-[208px] h-[191px] bg-white">
      <Blocks
        items={[
          "left-0 top-0 w-[36px] h-[169px] bg-linear-to-b from-[#382d1e] to-[#241b10]",
          "left-0 top-[169px] w-[36px] h-[22px] bg-[#111]",
          "left-[36px] top-0 w-[8px] h-[191px] bg-[#ffb13c]",
          "left-[44px] top-[87px] w-[62px] h-px bg-[#999]",
          "left-[98px] top-[72px] w-[8px] h-[16px] border-l border-t border-[#999]",
          "left-[101px] top-[78px] w-[4px] h-[9px] bg-[#6d9d97]",
          "left-[105px] top-0 w-px h-[149px] bg-[#999]",
          "left-[172px] top-0 w-px h-[50px] bg-[#999]",
          "left-[173px] top-[23px] w-[35px] h-[27px] bg-[#eee]",
          "left-[106px] top-[117px] w-[38px] h-[32px] bg-[#eee]",
          "left-[44px] top-[149px] w-[27px] h-[42px] bg-[#d0dded]",
          "left-[71px] top-[149px] w-[69px] h-[39px] bg-[#ff861f]",
          "left-[71px] top-[188px] w-[69px] h-[3px] bg-[#0078e4]",
          "left-[140px] top-[149px] w-[43px] h-[42px] bg-[#0074dc]",
          "left-[140px] top-[174px] w-[28px] h-[17px] bg-[#ff4d08]",
          "left-[183px] top-[168px] w-[25px] h-[23px] border-t border-[#2c5f97] bg-[#cce4f7]",
        ]}
      />
      <AppIcon c="left-[109px] top-0" />
      <T c="left-[130px] -top-[2px] text-xs text-[#888]">lol</T>
      <GlossTri c="left-[44px] top-[60px]" />
      <Clip c="left-[44px] top-[93px] w-[16px] h-[14px]"><AppIcon c="-left-[2px] top-0" /></Clip>
      <T c="left-[63px] top-[92px] text-xs text-[#888]">lol</T>
      <Clip c="left-[139px] top-[43px] w-[8px] h-[7px]"><Tri c="-left-[12px] top-0" /></Clip>
      <Clip c="left-[126px] top-[62px] w-[18px] h-[33px]"><Tri c="left-0 top-0" /></Clip>
      <Clip c="left-[60px] top-[135px] w-[40px] h-[14px]"><Tri c="left-0 top-0" /></Clip>
      <GlossTri c="left-[136px] top-[176px]" />
      <T c="left-[182px] top-[174px] font-['Liberation_Sans',sans-serif] text-[11px]">ndom</T>
      <Zoomer plus c="left-[-3px] top-[175px] text-[#999]" />
    </Clip>
    <Blocks
      items={[
        "left-[822px] top-[412px] w-[148px] h-[12px] border-r border-t border-[#666]",
        "left-[822px] top-[507px] w-[63px] h-[101px] bg-linear-to-r from-[#443728] to-[#261d12] to-25%",
        "left-[885px] top-[507px] w-[8px] h-[101px] bg-[#ffb13c]",
        "left-[893px] top-[507px] w-[33px] h-[101px] bg-white",
        "left-[929px] top-[423px] w-[64px] h-[33px] bg-linear-to-r from-[#443728] to-[#261d12] to-15%",
        "left-[926px] top-[456px] w-[67px] h-[25px] bg-[#111]",
        "left-[993px] top-[423px] w-[8px] h-[58px] bg-[#ffb13c]",
        "left-[1001px] top-[423px] w-[26px] h-[13px] bg-white",
        "left-[1001px] top-[436px] w-[26px] h-[45px] bg-[#d5dded]",
        "left-[926px] top-[481px] w-[101px] h-[60px] bg-white",
        "left-[981px] top-[481px] w-[46px] h-[60px] bg-linear-to-r from-[#b9c4db] to-[#d7e0ee] to-20%",
        "left-[926px] top-[541px] w-[101px] h-[25px] bg-[#eee]",
        "left-[926px] top-[560px] w-[55px] h-[6px] bg-black",
        "left-[926px] top-[566px] w-[101px] h-[29px] bg-black",
        "left-[926px] top-[595px] w-[101px] h-[13px] bg-white",
        "left-[1027px] top-[559px] w-[18px] h-[24px] border-t border-[#333] bg-[#101010]",
        "left-[1027px] top-[584px] w-[18px] h-[4px] bg-white",
        "left-[893px] top-[594px] w-[62px] h-[14px] border-r border-t border-[#aaa]",
        "left-[926px] top-[468px] w-[17px] h-[2px] bg-[#333]",
      ]}
    />
    <Clip c="left-[946px] top-[419px] w-[16px] h-[4px]"><Cross c="left-[3px] top-0 text-[#777]" /></Clip>
    <Zoomer plus c="left-[954px] top-[462px] text-[#aaa]" />
    <T c="left-[822px] top-[470px] text-[11px] text-white">ll usin</T>
    <T c="left-[864px] top-[470px] text-[11px] text-white">this compute</T>
    <GlossTri blue c="left-[837px] top-[483px]" />
    <Slider label="Document zoom, upper" value={33} c="left-[928px] top-[552px] w-[68px]" />
    <Blocks items={["left-[952px] top-[526px] w-[23px] h-[38px] border border-black bg-[#202020]"]} />
    <Zoomer plus c="left-[1006px] top-[545px] text-[#555]" />
    <Clip c="left-[1027px] top-[564px] w-[18px] h-[18px]"><T c="left-0 top-0 text-xs text-white">%00</T></Clip>
    <Clip c="left-[893px] top-[599px] w-[60px] h-[9px]">
      <AppIcon c="-left-[2px] top-0" />
      <T c="left-[20px] -top-[1px] text-xs text-[#888]">lol</T>
    </Clip>
    <Clip c="left-[976px] top-[595px] w-[18px] h-[6px]"><Tri c="-left-[1px] -top-[26px]" /></Clip>
  </>
);

const NarrowStrip = () => (
  <Clip c="left-[848px] top-[420px] w-[14px] h-[300px]">
    <Blocks
      items={[
        "left-0 top-[187px] w-px h-[98px] bg-white",
        "left-px right-0 top-0 h-[300px] bg-black",
        "left-px right-0 top-0 h-[5px] bg-[#ff5f10]",
        "left-px right-0 top-[5px] h-[7px] bg-[#0098ee]",
        "left-px right-0 top-[12px] h-[5px] bg-white",
        "left-px right-0 top-[25px] h-px bg-[#666]",
        "left-px right-0 top-[38px] h-[10px] bg-[#161616]",
        "left-px right-0 top-[48px] h-[190px] bg-white",
        "left-px right-0 top-[48px] h-[29px] border-y border-[#2c5f97] bg-[#cce4f7]",
        "left-px right-0 top-[89px] h-[29px] border-y border-[#2c5f97] bg-[#cce4f7]",
        "left-px right-0 top-[172px] h-[14px] border-b border-[#bbb] bg-[#f0f0f0]",
        "left-px right-0 top-[206px] h-[32px] border-t border-[#bbb] bg-[#f5f6f7]",
        "left-px right-0 top-[264px] h-[7px] bg-[#30271b]",
        "left-px right-0 top-[285px] h-[9px] bg-[#30271b]",
        "left-[8px] top-[276px] w-px h-[3px] bg-[#bbb]",
      ]}
    />
    <T c="left-px top-[55px] font-['Liberation_Sans',sans-serif] text-[11px]">os</T>
    <T c="left-px top-[95px] font-['Liberation_Sans',sans-serif] text-[11px]">orre</T>
    <T c="left-px top-[125px] text-[11px] text-[#999]">Wo</T>
    <T c="left-px top-[218px] text-[11px] text-[#555]">s</T>
    <T c="left-[6px] top-[247px] text-[11px] text-[#aaa]">Fo</T>
  </Clip>
);

const RightLower = () => (
  <>
    <Clip c="left-[1045px] top-[288px] right-0 h-[432px] bg-black">
      <WarnStrip c="left-0 top-0" />
      <Blocks
        items={[
          "left-0 right-0 top-[17px] h-[9px] bg-[#30271b]",
          "left-0 top-[59px] w-[148px] h-[13px] border-r border-t border-[#777]",
          "left-[107px] top-[70px] w-[64px] h-[34px] bg-linear-to-r from-[#51422f] to-[#261d12] to-15%",
          "left-[104px] top-[104px] w-[67px] h-[12px] bg-[#101010]",
          "left-[104px] top-[115px] w-[18px] h-px bg-[#444]",
          "left-[171px] top-[70px] w-[8px] h-[46px] bg-[#ffb13c]",
          "left-[179px] top-[70px] right-0 h-[13px] bg-white",
          "left-[179px] top-[83px] w-[27px] h-[33px] bg-[#d5dded]",
          "left-[206px] top-[83px] right-0 h-[33px] bg-[#ff861f]",
          "left-[187px] top-[116px] w-[36px] h-[18px] bg-[#101010]",
          "left-[223px] top-[116px] w-[8px] h-[18px] bg-[#ffb13c]",
          "left-[231px] top-[116px] right-0 h-[18px] bg-[#d5dded]",
          "left-0 top-[154px] w-[31px] h-[169px] bg-linear-to-r from-[#4a3d2c] to-[#2c2316] to-30%",
          "left-[31px] top-[143px] w-[156px] h-[43px] border-b border-[#555] bg-[#101010]",
          "left-[31px] top-[176px] w-[68px] h-[9px] bg-[#eee]",
          "left-[31px] top-[185px] w-[40px] h-[130px] bg-[#00b2ff]",
          "left-[71px] top-[176px] w-[28px] h-[139px] bg-white",
          "left-[90px] top-[232px] w-px h-[80px] bg-[#aaa]",
          "left-[99px] top-[185px] w-[8px] h-[130px] bg-[#ff4d05]",
          "left-[107px] top-[185px] w-[64px] h-[111px] border-r-2 border-[#51432f] bg-linear-to-b from-[#3a2f20] to-[#241c11]",
          "left-[107px] top-[296px] w-[39px] h-[19px] bg-[#241c11]",
          "left-[146px] top-[296px] w-[41px] h-[9px] bg-[#30271b]",
          "left-[195px] top-[335px] right-0 h-[25px] border-l border-t border-[#333] bg-[#101010]",
          "left-[61px] top-[360px] w-[134px] h-[35px] bg-[#f0f0f0]",
          "left-[195px] top-[360px] right-0 h-[35px] bg-[#0080dd]",
          "left-[98px] top-[395px] w-[69px] h-[32px] bg-[#0084ea]",
          "left-[167px] top-[395px] right-0 h-[37px] bg-white",
          "left-[45px] top-[395px] w-[53px] h-[14px] bg-white",
          "left-[52px] top-[395px] w-[46px] h-[14px] bg-linear-to-r from-[#b9c4db] to-[#d7e0ee] to-20%",
          "left-0 top-[348px] w-[31px] h-[59px] bg-white",
          "left-0 top-[407px] w-[98px] h-[20px] border-t border-[#ddd] bg-[#f0f0f0]",
          "left-[98px] top-[427px] right-0 h-[5px] bg-[#f5f5f5]",
        ]}
      />
      <Clip c="left-[126px] top-[66px] w-[14px] h-[4px]"><Cross c="left-0 top-0 text-[#777]" /></Clip>
      <Clip c="left-[130px] top-[109px] w-[20px] h-[7px]"><Zoomer plus c="left-[2px] top-0 text-[#888]" /></Clip>
      <Clip c="left-[195px] top-[70px] w-[32px] h-[13px]"><Tri c="left-0 top-0" /></Clip>
      <Zoomer plus c="left-[184px] top-[118px] text-[#999]" />
      <T c="left-0 top-[117px] text-[11px] text-white">ll usin</T>
      <Btn c="left-[112px] top-[154px] h-[21px] w-[73px] border-[#5e5e5e] bg-[#1e1e1e] text-[11px] text-white">OK</Btn>
      <Clip c="left-[71px] top-[190px] w-[24px] h-[40px]"><Tri c="-left-[10px] top-[2px]" /></Clip>
      <Clip c="left-[94px] top-[232px] w-[5px] h-[14px]"><AppIcon c="left-0 top-0" /></Clip>
      <Clip c="left-[31px] top-[185px] w-[40px] h-[130px]">
        <WordDoc c="left-[2px] top-[59px]" />
        <T c="-left-[9px] top-0 text-[11px] text-white">externalca</T>
        <T c="-left-[8px] top-[108px] text-[11px] text-white">holidayco</T>
        <T c="left-[7px] top-[122px] text-[11px] text-white">ade.rtf</T>
      </Clip>
      <Clip c="left-[99px] top-[185px] w-[8px] h-[130px]"><T c="-left-[2px] top-0 text-[11px]">ra</T><T c="-left-[2px] top-[108px] text-[11px]">re</T></Clip>
      <T c="left-[61px] top-[313px] text-[11px] text-white">pmoc siht gni</T>
      <Btn c="left-[105px] top-[369px] h-[23px] w-[75px] border-2 border-black bg-[#1e1e1e] text-[11px] text-white outline-1 -outline-offset-2 outline-[#777]">KO</Btn>
    </Clip>
    <Blocks
      items={[
        "left-[862px] top-[611px] w-[214px] h-[25px] border-t border-[#333] bg-[#101010]",
        "left-[890px] top-[614px] w-px h-[20px] bg-[#444]",
        "left-[862px] top-[636px] w-[214px] h-[59px] bg-white",
        "left-[862px] top-[695px] w-[281px] h-[20px] border-t border-[#ddd] bg-[#f0f0f0]",
        "left-[911px] top-[697px] w-px h-[18px] bg-[#ccc]",
        "left-[942px] top-[697px] w-px h-[18px] bg-[#ccc]",
        "left-[862px] top-[715px] w-[206px] h-[5px] bg-[#000b18]",
        "left-[973px] top-[624px] w-[84px] h-0.5 bg-[#222]",
        "left-[1076px] top-[635px] w-[30px] h-px bg-[#555]",
      ]}
    />
    <T c="left-[911px] top-[617px] text-[11px] text-white">%001</T>
    <Zoomer c="left-[947px] top-[617px] text-[#aaa]" />
    <svg viewBox="0 0 10 17" className="absolute left-[1011px] top-[616px] h-[17px] w-2.5"><path d="M0 0h10v12l-5 5-5-5z" fill="#f58220" /></svg>
    <Zoomer c="left-[1068px] top-[617px] text-[#777]" />
    <T c="left-[964px] top-[701px] text-[11px]">100%</T>
    <Zoomer c="left-[999px] top-[701px] text-[#666]" />
    <Slider label="Document zoom" value={50} c="left-[1025px] top-[707px] w-[86px]" />
    <Zoomer plus c="left-[1121px] top-[701px] text-[#555]" />
    <Blocks items={["left-[1068px] top-[681px] w-[22px] h-[38px] border border-black bg-[#202020]"]} />
    <svg viewBox="0 0 194 60" className="absolute left-[1037px] top-[612px] h-[60px] w-[194px] opacity-60" fill="none" stroke="#c4c4c4" strokeWidth="5" aria-label="ANY RUN">
      <path d="M3 48 13 12h4l10 36M7 36h16M33 49V12l16 35V12M51 12l7 20 7-20M58 31v18M135 49V13h11q10 0 10 10t-10 10h-10m10 0 10 16M163 12v28q0 7 7 7t7-7V12M183 49V12l9 35V12" />
      <path d="M74 48V9q0-6 6-4l37 20q4 3 0 6L82 56q-7 3-8-4M83 13v34l26-20-25-12M82 45l31-18" strokeWidth="3" />
    </svg>
  </>
);

const FrontDialog = () => (
  <>
    <div className="absolute left-[131px] top-[638px] h-[40px] w-[226px] bg-[#2598cc]" />
    <section role="dialog" aria-label="lol" className="absolute left-[131px] top-[528px] flex h-[147px] w-[224px] flex-col border border-[#40566a] bg-white">
      <AppIcon c="left-[3px] top-[6px]" />
      <T c="left-[24px] top-1 text-xs text-black">lol</T>
      <Cross c="left-[202px] top-[7px] text-black" />
      <Tri c="left-[21px] top-[49px]" />
      <T c="left-[62px] top-[57px] text-[11px] text-black">Still using this computer?</T>
      <div className="mt-auto flex h-[42px] items-center justify-end bg-[#f0f0f0] px-4">
        <button type="button" className="flex h-[21px] w-[73px] items-center justify-center border-2 border-[#0f6fbd] bg-[#e1e1e1] text-[11px] leading-4 text-black">OK</button>
      </div>
    </section>
  </>
);

const Taskbar = () => (
  <>
    <Clip c="left-0 top-[680px] w-[203px] h-[40px] bg-[#1b0d05]">
      <button type="button" aria-label="Start" className="absolute left-0 top-0 flex h-10 w-12 items-center justify-center bg-[#ffe6df]">
        <svg viewBox="0 0 16 16" className="size-4"><path d="m0 2 7-1v7H0zm8-1 8-1v8H8zM0 9h7v6l-7-1zm8 0h8v7l-8-1z" /></svg>
      </button>
      <input aria-label="Search" readOnly defaultValue="hcraes ot ereh epyT" className="absolute left-[49px] top-[1px] h-[38px] w-[180px] border border-[#cc8750] bg-transparent pl-[38px] text-sm leading-4 text-[#c9b8ad] outline-none" />
      <Clip c="left-[115px] top-[25px] w-[30px] h-[15px]"><GlossTri c="left-0 top-0" /></Clip>
    </Clip>
    <Clip c="left-[203px] top-[677px] w-[203px] h-[43px] bg-black">
      <Blocks items={["left-0 top-[4px] w-[157px] h-px bg-[#555]", "left-0 top-[24px] w-[184px] h-px bg-[#555]", "left-[184px] top-[3px] w-[19px] h-[40px] bg-[#05151e]", "left-[184px] bottom-0 w-[19px] h-[2px] bg-[#78b4e6]"]} />
      <T c="left-[1px] top-[29px] text-xs text-[#666]">lol</T>
      <Clip c="left-[178px] top-[31px] w-[7px] h-[12px]"><Cross c="left-0 top-0 text-[#888]" /></Clip>
      <svg viewBox="0 0 22 22" className="absolute left-[196px] top-[12px] size-[22px]"><circle cx="11" cy="11" r="11" fill="#1687d6" /><path d="M3 16q2-10 14-9" stroke="#5fd1ee" strokeWidth="3" fill="none" /></svg>
    </Clip>
  </>
);

export default function App() {
  return (
    <main className="relative h-screen w-full overflow-hidden bg-black font-['Open_Sans','Noto_Sans',sans-serif] text-xs">
      <DesktopBase />
      <PayloadPanel />
      <WordPadDark />
      <WordPadLight />
      <LeftDarkDialog />
      <LeftDesktop />
      <MiddleColumn />
      <PayloadDark />
      <CenterDialog />
      <CenterDesktop />
      <RightTop />
      <WhiteStack />
      <NarrowStrip />
      <RightLower />
      <Taskbar />
      <FrontDialog />
    </main>
  );
}
